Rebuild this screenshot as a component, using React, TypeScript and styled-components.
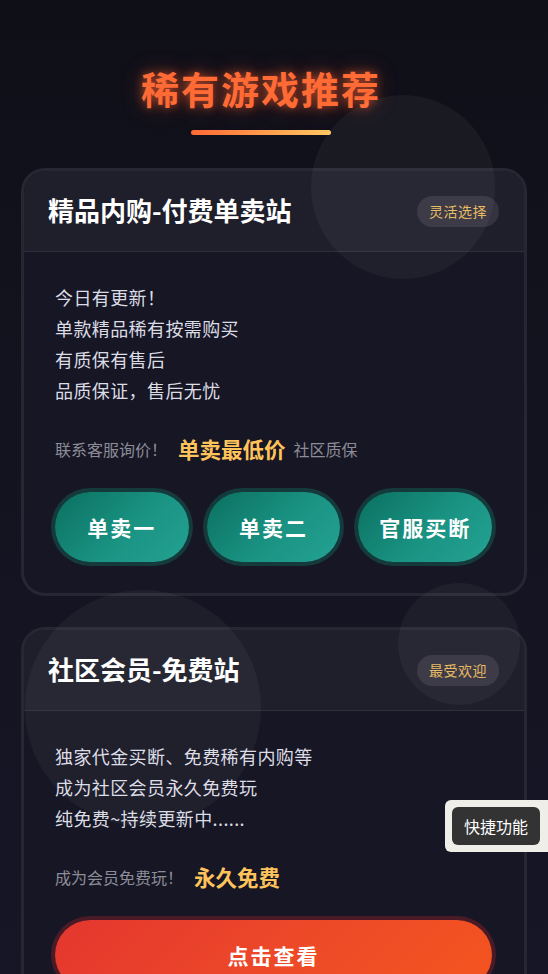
import React from "react";
import styled, { createGlobalStyle } from "styled-components";

const Global = createGlobalStyle`
  html, body { margin: 0; padding: 0; }
  body {
    background: #12121c;
    font-family: "Noto Sans CJK SC", "Noto Sans", sans-serif;
    -webkit-font-smoothing: antialiased;
  }
  * { box-sizing: border-box; }
`;

const Page = styled.div`
  position: relative;
  min-height: 974px;
  overflow: hidden;
  padding: 62px 0 40px;
  background: linear-gradient(180deg, #0f0f18 0%, #13131f 35%, #161628 100%);
`;

const Bubble = styled.div<{ $x: number; $y: number; $r: number }>`
  position: absolute;
  left: ${(p) => p.$x - p.$r}px;
  top: ${(p) => p.$y - p.$r}px;
  width: ${(p) => p.$r * 2}px;
  height: ${(p) => p.$r * 2}px;
  border-radius: 50%;
  background: rgba(255, 255, 255, 0.045);
  pointer-events: none;
  z-index: 2;
`;

const TitleBlock = styled.header`
  display: flex;
  flex-direction: column;
  align-items: center;
  padding-right: 26px;
`;

const Heading = styled.h1`
  margin: 0;
  font-size: 38px;
  line-height: 52px;
  font-weight: 700;
  letter-spacing: 2px;
  color: #ff6a35;
  text-shadow: 0 0 10px rgba(255, 100, 50, 0.6), 0 0 22px rgba(255, 90, 40, 0.35);
`;

const Underline = styled.div`
  width: 140px;
  height: 5px;
  border-radius: 3px;
  margin: 16px 0 33px;
  background: linear-gradient(90deg, #ff6a35 0%, #ffc862 100%);
`;

const Card = styled.section<{ $gap?: number }>`
  position: relative;
  z-index: 1;
  margin: ${(p) => p.$gap ?? 0}px 21px 0;
  border: 3px solid #272734;
  border-radius: 24px;
  overflow: hidden;
  background: #161624;
`;

const CardHeader = styled.div`
  display: flex;
  align-items: center;
  justify-content: space-between;
  height: 81px;
  padding: 0 25px 0 24px;
  background: #1f1f2b;
  border-bottom: 1px solid #2f2f3c;
`;

const CardTitle = styled.h2`
  margin: -4px 0 0;
  font-size: 26px;
  font-weight: 700;
  color: #ffffff;
`;

const Badge = styled.span`
  display: inline-flex;
  align-items: center;
  height: 31px;
  padding: 0 12px;
  border-radius: 16px;
  background: #34333f;
  color: #e8b85c;
  font-size: 14px;
  letter-spacing: 0.5px;
`;

const CardBody = styled.div`
  padding: 30px 32px 31px 31px;
`;

const Lines = styled.div`
  display: flex;
  flex-direction: column;
`;

const Line = styled.p`
  margin: 0;
  font-size: 18px;
  line-height: 31px;
  letter-spacing: 0.4px;
  color: #dcdce4;
`;

const PriceRow = styled.div`
  display: flex;
  align-items: center;
  height: 30px;
  margin-top: 28px;
`;

const Muted = styled.span<{ $gapLeft?: number }>`
  font-size: 16px;
  line-height: 30px;
  color: #8d8d98;
  margin-left: ${(p) => p.$gapLeft ?? 0}px;
`;

const Highlight = styled.span`
  font-size: 21.5px;
  line-height: 30px;
  font-weight: 700;
  color: #ffc35c;
  margin-left: 11px;
`;

const ButtonGrid = styled.div<{ $cols: number }>`
  display: grid;
  grid-template-columns: repeat(${(p) => p.$cols}, 1fr);
  gap: 18px;
  margin-top: 28px;
`;

const PillButton = styled.button<{ $tone: "teal" | "red" }>`
  height: 70px;
  border: none;
  border-radius: 35px;
  cursor: pointer;
  font-family: inherit;
  font-size: 21px;
  font-weight: 700;
  letter-spacing: 2px;
  color: #ffffff;
  background: ${(p) =>
    p.$tone === "teal"
      ? "linear-gradient(135deg, #0b7060 0%, #1a9383 55%, #24a293 100%)"
      : "linear-gradient(135deg, #e4362f 0%, #ed4a28 55%, #f4541f 100%)"};
  box-shadow: 0 0 0 4px ${(p) => (p.$tone === "teal" ? "#143a3b" : "#4a1b27")};
`;

const QuickTab = styled.div`
  position: fixed;
  right: 0;
  top: 800px;
  z-index: 5;
  padding: 7px 8px 7px 7px;
  background: #efeee8;
  border-radius: 6px 0 0 6px;
`;

const QuickInner = styled.div`
  padding: 0 12px;
  height: 38px;
  display: flex;
  align-items: center;
  border-radius: 6px;
  background: #333333;
  color: #ffffff;
  font-size: 16px;
`;

export default function App() {
  return (
    <>
      <Global />
      <Page>
        <Bubble $x={403} $y={187} $r={92} />
        <Bubble $x={143} $y={708} $r={118} />
        <Bubble $x={459} $y={644} $r={61} />

        <TitleBlock>
          <Heading>稀有游戏推荐</Heading>
          <Underline />
        </TitleBlock>

        <Card>
          <CardHeader>
            <CardTitle>精品内购-付费单卖站</CardTitle>
            <Badge>灵活选择</Badge>
          </CardHeader>
          <CardBody>
            <Lines>
              <Line>今日有更新！</Line>
              <Line>单款精品稀有按需购买</Line>
              <Line>有质保有售后</Line>
              <Line>品质保证，售后无忧</Line>
            </Lines>
            <PriceRow>
              <Muted>联系客服询价！</Muted>
              <Highlight>单卖最低价</Highlight>
              <Muted $gapLeft={8}>社区质保</Muted>
            </PriceRow>
            <ButtonGrid $cols={3}>
              <PillButton $tone="teal">单卖一</PillButton>
              <PillButton $tone="teal">单卖二</PillButton>
              <PillButton $tone="teal">官服买断</PillButton>
            </ButtonGrid>
          </CardBody>
        </Card>

        <Card $gap={31}>
          <CardHeader>
            <CardTitle>社区会员-免费站</CardTitle>
            <Badge>最受欢迎</Badge>
          </CardHeader>
          <CardBody>
            <Lines>
              <Line>独家代金买断、免费稀有内购等</Line>
              <Line>成为社区会员永久免费玩</Line>
              <Line>纯免费~持续更新中......</Line>
            </Lines>
            <PriceRow>
              <Muted>成为会员免费玩！</Muted>
              <Highlight>永久免费</Highlight>
            </PriceRow>
            <ButtonGrid $cols={1}>
              <PillButton $tone="red">点击查看</PillButton>
            </ButtonGrid>
          </CardBody>
        </Card>

        <QuickTab>
          <QuickInner>快捷功能</QuickInner>
        </QuickTab>
      </Page>
    </>
  );
}
